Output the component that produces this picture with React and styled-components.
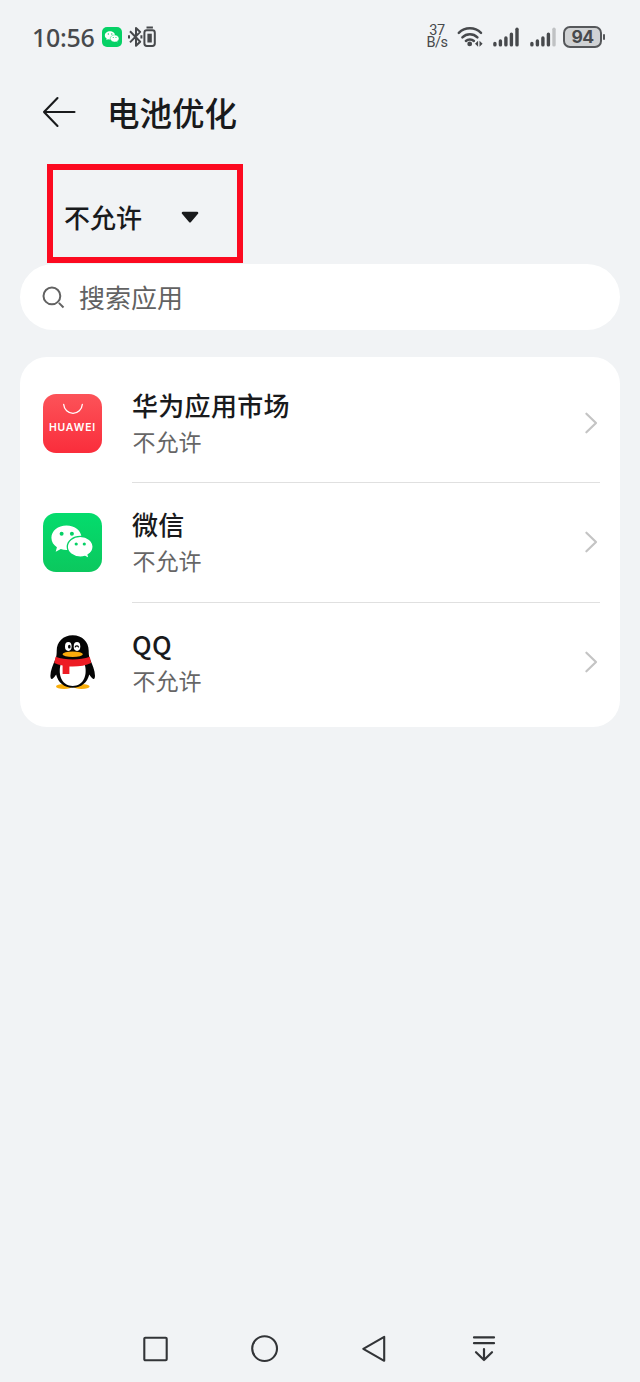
import React from 'react';
import styled, { createGlobalStyle } from 'styled-components';

const GlobalStyle = createGlobalStyle`
  * {
    box-sizing: border-box;
  }

  body {
    margin: 0;
    background: #f1f3f5;
    font-family: "Noto Sans CJK SC", "Noto Sans", sans-serif;
    color: #191a1c;
  }

  svg {
    display: block;
    flex: none;
  }
`;

const Screen = styled.div`
  width: 640px;
  height: 1382px;
  display: flex;
  flex-direction: column;
  overflow: hidden;
`;

const StatusBar = styled.header`
  height: 74px;
  padding: 0 38px 0 32px;
  display: flex;
  align-items: center;
  justify-content: space-between;
  color: #47494c;
`;

const StatusGroup = styled.div`
  display: flex;
  align-items: center;
  gap: ${props => props.$gap || 0}px;
`;

const Time = styled.span`
  width: 63px;
  margin-right: 7px;
  font-family: "Noto Sans", sans-serif;
  font-size: 25px;
  font-weight: 500;
  line-height: 30px;
  letter-spacing: -0.3px;
  white-space: nowrap;
`;

const Speed = styled.div`
  width: 22px;
  display: flex;
  flex-direction: column;
  align-items: center;
  font-family: Roboto, sans-serif;
  font-size: 14.5px;
  line-height: 12px;
  letter-spacing: -0.5px;
  white-space: nowrap;
`;

const Battery = styled.div`
  position: relative;
  width: 39px;
  height: 22px;
  display: flex;
  align-items: center;
  justify-content: center;
  border: 2px solid #55575a;
  border-radius: 7px;
  background: #d0d2d4;
  font-family: Inter, sans-serif;
  font-size: 17.5px;
  font-weight: 700;
  letter-spacing: -0.6px;
  line-height: 18px;

  &::after {
    content: "";
    position: absolute;
    right: -5px;
    top: 6px;
    width: 2px;
    height: 6px;
    border-radius: 1px;
    background: #55575a;
  }
`;

const TitleBar = styled.div`
  height: 90px;
  padding: 0 42px 14px;
  display: flex;
  align-items: center;
  gap: 31px;
`;

const Title = styled.h1`
  margin: 0;
  font-size: 32.5px;
  font-weight: 500;
  line-height: 48px;
`;

const Filter = styled.div`
  width: 196px;
  height: 99px;
  margin-left: 47px;
  padding: 7px 0 0 11px;
  display: flex;
  align-items: center;
  gap: 38px;
  border: 6px solid #fc0a20;
  font-size: 26px;
  font-weight: 500;
  line-height: 38px;
`;

const Search = styled.div`
  height: 66px;
  margin: 1px 20px 27px;
  padding-left: 22px;
  display: flex;
  align-items: center;
  gap: 13px;
  border-radius: 33px;
  background: #fff;
  color: #626262;
  font-size: 26px;
  line-height: 38px;
`;

const Card = styled.div`
  height: 370px;
  margin: 0 20px;
  padding: 7px 20px 5px 23px;
  display: flex;
  flex-direction: column;
  border-radius: 27px;
  background: #fff;
`;

const Row = styled.div`
  flex: 1;
  display: flex;
  align-items: center;
  gap: 30px;
`;

const RowBody = styled.div`
  flex: 1;
  height: 100%;
  display: flex;
  align-items: center;
  justify-content: space-between;
  border-bottom: 1px solid ${props => (props.$last ? 'transparent' : '#e0e0e0')};
`;

const Name = styled.div`
  margin-top: -1px;
  font-size: 26px;
  font-weight: 500;
  line-height: 38px;
  letter-spacing: 0.3px;
`;

const State = styled.div`
  margin-left: 0.5px;
  color: #666;
  font-size: 23px;
  line-height: 35px;
`;

const AppIcon = styled.div`
  width: 59px;
  height: 59px;
  overflow: hidden;
  border-radius: 13px;
  background: ${props => props.$bg || 'none'};
`;

const MarketIcon = styled(AppIcon)`
  display: flex;
  flex-direction: column;
  align-items: center;
  color: #fff;
  font-family: Inter, sans-serif;
  font-size: 10.4px;
  font-weight: 600;
  letter-spacing: 0.9px;
  line-height: 12px;
`;

const SmallIcon = styled(AppIcon)`
  width: 20px;
  height: 20px;
  margin-right: 6px;
  border-radius: 5px;
`;

const NavBar = styled.nav`
  margin-top: auto;
  height: 67px;
  padding: 0 141px 0 140px;
  display: flex;
  align-items: center;
  justify-content: space-between;
`;

const WeChat = ({ size = 59, color = '#06d166' }) => (
  <svg width={size} height={size} viewBox="0 0 59 59">
    <g fill="#fff">
      <path d="M23.5 12.5C15 12.5 8.4 17.8 8.4 24.8c0 4 2.1 7.2 5.5 9.4l-1.2 4.5 5.1-2.6c1.8.6 3.7.9 5.7.9 8.4 0 15-5.3 15-12.2s-6.6-12.3-15-12.3Z" />
      <path
        d="M37.3 23.4c-7.3 0-13 4.6-13 10.4s5.7 10.3 13 10.3c1.7 0 3.3-.2 4.7-.7l4.1 2.2-1-3.7c3.1-1.9 5-4.8 5-8.1 0-5.8-5.6-10.4-12.8-10.4Z"
        stroke={color}
        strokeWidth="1.3"
      />
    </g>
    <g fill={color}>
      <circle cx="18.6" cy="20.7" r="2" />
      <circle cx="28.9" cy="20.7" r="2" />
      <circle cx="33.2" cy="31" r="1.6" />
      <circle cx="41.3" cy="31" r="1.6" />
    </g>
  </svg>
);

const Penguin = () => (
  <svg width="59" height="59" viewBox="0 0 59 59">
    <ellipse cx="21" cy="53.6" rx="8" ry="2.5" fill="#f9ae0b" />
    <ellipse cx="38.6" cy="53.6" rx="8" ry="2.5" fill="#f9ae0b" />
    <path
      d="M29.7 2.2c-9.6 0-16 6.6-16 15.6 0 2.6-.2 5.4-.9 7.4C10 31.4 7.4 37.6 7.4 42.8c0 2.3.8 3.7 1.7 3.2 1.3-.7 2.7-2.4 4-4.4 2 8 8 13.2 16.6 13.2s14.6-5.2 16.6-13.2c1.3 2 2.7 3.7 4 4.4.9.5 1.7-.9 1.7-3.2 0-5.2-2.6-11.4-5.4-17.6-.7-2-.9-4.8-.9-7.4 0-9-6.4-15.6-16-15.6Z"
      fill="#050505"
    />
    <path d="M17.6 31.5h24.2c3 11.5-2 21.4-12.1 21.4S14.6 43 17.6 31.5Z" fill="#fff" />
    <path d="M12.6 23.8c9.8 3.6 24.4 3.6 34.2 0l1.3 6.2c-4.6 2.4-11.6 3.6-18.4 3.6-1.1 0-2.2 0-3.3-.1v7.4h-6.8v-8.3c-3.1-.6-5.9-1.5-8.3-2.6Z" fill="#ed1c24" />
    <ellipse cx="25.3" cy="13.5" rx="3.3" ry="4.4" fill="#fff" />
    <ellipse cx="34" cy="13.5" rx="3.3" ry="4.4" fill="#fff" />
    <ellipse cx="26.3" cy="13.7" rx="1.3" ry="1.9" fill="#050505" />
    <path d="M32.2 14c.6-1.5 2.7-1.5 3.3 0" fill="none" stroke="#050505" strokeWidth="1.1" strokeLinecap="round" />
    <ellipse cx="29.7" cy="21.3" rx="10.2" ry="2.8" fill="#faab0c" />
  </svg>
);

const Bars = ({ weak }) => (
  <svg width="26" height="22" viewBox="0 0 26 22" stroke="#47494c" strokeWidth="3.4" strokeLinecap="round">
    <path d="M1.9 17.4v1.5M7.4 15v3.9M12.9 12v6.9M18.4 8.2v10.7" />
    <path d="M24 3.2v15.7" stroke={weak ? '#c0c2c4' : '#47494c'} />
  </svg>
);

const Chevron = () => (
  <svg width="18" height="24" viewBox="0 0 18 24">
    <path d="m4.4 2.7 9.6 9.3-9.6 9.3" fill="none" stroke="#c4c4c4" strokeWidth="2.2" strokeLinecap="round" strokeLinejoin="round" />
  </svg>
);

const apps = [
  {
    name: '华为应用市场',
    icon: (
      <MarketIcon $bg="linear-gradient(#fc5359, #fa2d3b)">
        <svg width="24" height="28" viewBox="0 0 24 28">
          <path d="M2.7 10.5c.4 5 4.4 8.8 9.3 8.8s8.9-3.8 9.3-8.8" fill="none" stroke="#fff" strokeWidth="1.3" strokeLinecap="round" />
        </svg>
        HUAWEI
      </MarketIcon>
    ),
  },
  {
    name: '微信',
    icon: <AppIcon $bg="linear-gradient(#04dc6d, #0bc85e)"><WeChat /></AppIcon>,
  },
  {
    name: 'QQ',
    icon: <AppIcon><Penguin /></AppIcon>,
  },
];

const App = () => {
  return (
    <Screen>
      <GlobalStyle />
      <StatusBar>
        <StatusGroup>
          <Time>10:56</Time>
          <SmallIcon $bg="#06d166"><WeChat size={20} /></SmallIcon>
          {/* bluetooth with device battery */}
          <svg width="29" height="22" viewBox="0 0 29 22" fill="none" stroke="#47494c" strokeWidth="2" strokeLinejoin="round">
            <path d="m2 5.2 10.2 10.5L8 19.8V2l4.2 3.9L2 16.4M1 9.2v3.2M13.4 9.2v3.2" />
            <path d="M18.5 1.5h6.4" strokeWidth="2" />
            <rect x="16.4" y="4.3" width="10.4" height="15.6" rx="2.4" />
            <rect x="19.4" y="7.7" width="4.4" height="8.8" fill="#47494c" stroke="none" />
          </svg>
        </StatusGroup>
        <StatusGroup $gap={11}>
          <StatusGroup $gap={9}>
            <Speed>
              <span>37</span>
              <span>B/s</span>
            </Speed>
            <svg width="27" height="22" viewBox="0 0 27 22" fill="none" stroke="#47494c" strokeWidth="2.5" strokeLinecap="round">
              <path d="M1.8 6.8c6.2-6 16-6 22.2 0M5.4 11.3c4.2-4 10.8-4 15 0M8.9 15c2.2-2.1 5.8-2.1 8 0" />
              <circle cx="12.7" cy="17.9" r="2.4" fill="#47494c" stroke="none" />
              <path d="m21.1 14.7-3.1 3 3.1 3ZM22.5 14.7l3.1 3-3.1 3Z" fill="#47494c" stroke="none" />
            </svg>
            <Bars />
          </StatusGroup>
          <StatusGroup $gap={7}>
            <Bars weak />
            <Battery>94</Battery>
          </StatusGroup>
        </StatusGroup>
      </StatusBar>

      <TitleBar>
        <svg width="34" height="32" viewBox="0 0 34 32" fill="none" stroke="#191a1c" strokeWidth="2.1" strokeLinecap="round" strokeLinejoin="round">
          <path d="M32.5 16H2M15.5 2 2 16l13.5 14" />
        </svg>
        <Title>电池优化</Title>
      </TitleBar>

      <Filter>
        不允许
        <svg width="20" height="14" viewBox="0 0 20 14">
          <path d="M3 3h14l-7 8.2Z" fill="#191a1c" stroke="#191a1c" strokeWidth="2.6" strokeLinejoin="round" />
        </svg>
      </Filter>

      <Search>
        <svg width="24" height="24" viewBox="0 0 24 24" fill="none" stroke="#626262" strokeWidth="2">
          <circle cx="9.9" cy="10.9" r="8.4" />
          <path d="m16.9 17.9 4.6 4.6" />
        </svg>
        搜索应用
      </Search>

      <Card>
        {apps.map((app, i) => (
          <Row key={app.name}>
            {app.icon}
            <RowBody $last={i === apps.length - 1}>
              <div>
                <Name>{app.name}</Name>
                <State>不允许</State>
              </div>
              <Chevron />
            </RowBody>
          </Row>
        ))}
      </Card>

      <NavBar>
        <svg width="30" height="30" viewBox="0 0 30 30" fill="none" stroke="#323437" strokeWidth="2.1">
          <rect x="4.3" y="3.8" width="22.4" height="22.4" rx="1" />
        </svg>
        <svg width="30" height="30" viewBox="0 0 30 30" fill="none" stroke="#323437" strokeWidth="2.1">
          <circle cx="14.6" cy="14.6" r="12.4" />
        </svg>
        <svg width="30" height="30" viewBox="0 0 30 30" fill="none" stroke="#323437" strokeWidth="2.1" strokeLinejoin="round">
          <path d="M25.2 2.8v24L4.3 14.8Z" />
        </svg>
        <svg width="30" height="30" viewBox="0 0 30 30" fill="none" stroke="#323437" strokeWidth="2.2" strokeLinecap="round" strokeLinejoin="round">
          <path d="M5 3.4h20M5 9.2h20M15 15v11M7 18.2l8 7.8 8-7.8" />
        </svg>
      </NavBar>
    </Screen>
  );
};

export default App;
